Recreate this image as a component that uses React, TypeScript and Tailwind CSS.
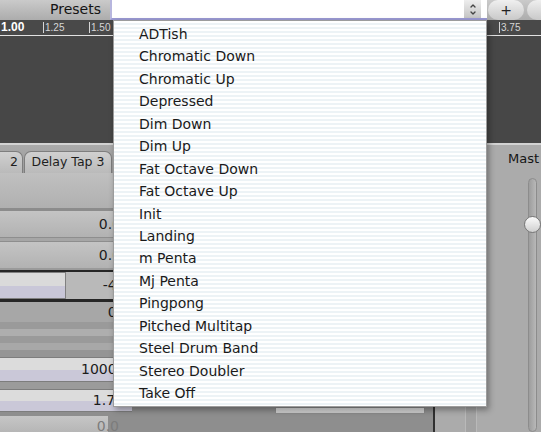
import { ChevronUp, ChevronDown } from "lucide-react";

const presets = [
  "ADTish",
  "Chromatic Down",
  "Chromatic Up",
  "Depressed",
  "Dim Down",
  "Dim Up",
  "Fat Octave Down",
  "Fat Octave Up",
  "Init",
  "Landing",
  "m Penta",
  "Mj Penta",
  "Pingpong",
  "Pitched Multitap",
  "Steel Drum Band",
  "Stereo Doubler",
  "Take Off",
];

function ValueRow({ h, value }: { h: string; value: string }) {
  return (
    <div className={`${h} flex items-center justify-end bg-gradient-to-b from-[#c4c4c4] to-[#b2b2b2] pr-[2px] text-[14px] text-[#1c1c1c]`}>
      {value}
    </div>
  );
}

function InputRow({ h, value, pr }: { h: string; value: string; pr: string }) {
  return (
    <div className={`${h} relative flex items-stretch`}>
      <div className="flex flex-1 flex-col border-y border-[#7d7d7d]">
        <div className="flex-1 bg-[#dcdcdc]" />
        <div className="flex-1 bg-[#cac8d8]" />
      </div>
      <div className={`absolute inset-y-0 right-0 ${pr} flex items-center text-[14px] text-[#1c1c1c]`}>{value}</div>
    </div>
  );
}

export default function App() {
  return (
    <div className="relative h-[432px] w-[541px] overflow-hidden bg-[#474747] font-['DejaVu_Sans',sans-serif]">
      {/* top bar */}
      <div className="flex h-[20px] bg-gradient-to-b from-[#cacaca] to-[#acacac]">
        <div className="w-[110px] shrink-0 pr-[9px] text-right text-[14px] leading-[19px] text-[#141414]">Presets</div>
        <div className="flex w-[377px] shrink-0 justify-end border-b-2 border-l-2 border-[#9a99d2] border-l-[#b7b6de] bg-white">
          <div className="mr-[6px] flex w-[17px] flex-col items-center justify-center bg-gradient-to-b from-[#eeeeee] to-[#c4c4c4] text-[#444]">
            <ChevronUp size={8} strokeWidth={4} className="-mb-[1px]" />
            <ChevronDown size={8} strokeWidth={4} />
          </div>
        </div>
        <div className="ml-[1px] flex w-[36px] shrink-0 items-center justify-center rounded-[10px] bg-gradient-to-b from-[#f0f0f0] to-[#c9c9c9] text-[14px] leading-none text-[#222]">
          +
        </div>
        <div className="ml-[3px] flex-1 rounded-l-[10px] bg-gradient-to-b from-[#efefef] to-[#c9c9c9]" />
      </div>

      {/* ruler */}
      <div className="relative h-[16px] border-b border-[#e2e2e2] bg-[#494949] font-['Liberation_Sans',sans-serif] text-[#d6d6d6]">
        <span className="absolute left-[1px] top-[1px] text-[12px] font-bold leading-[13px] text-white">1.00</span>
        <span className="absolute left-[43px] top-[2px] border-l border-[#d6d6d6] pl-[1px] text-[10px] leading-[11px]">1.25</span>
        <span className="absolute left-[89px] top-[2px] border-l border-[#d6d6d6] pl-[1px] text-[10px] leading-[11px]">1.50</span>
        <span className="absolute left-[499px] top-[2px] border-l border-[#d6d6d6] pl-[1px] text-[10px] leading-[11px]">3.75</span>
      </div>

      {/* dark arrangement area */}
      <div className="h-[107px] bg-[#474747]" />

      {/* lower panels */}
      <div className="flex h-[289px] border-t-2 border-[#d2d2d2]">
        <div className="flex w-[435px] shrink-0 flex-col border-r-2 border-[#303030] bg-[#8e8e8e]">
          {/* tabs */}
          <div className="flex h-[28px] items-end bg-gradient-to-b from-[#a9a9a9] to-[#9c9c9c]">
            <div className="flex h-[22px] w-[23px] items-center justify-end rounded-tr-[7px] border-r border-t border-[#7e7e7e] bg-gradient-to-b from-[#d0d0d0] to-[#bababa] pr-[4px] text-[12.5px] text-[#1e1e1e]">
              2
            </div>
            <div className="ml-[1px] flex h-[22px] w-[88px] items-center justify-center rounded-t-[7px] border-x border-t border-[#7e7e7e] bg-gradient-to-b from-[#d0d0d0] to-[#bababa] text-[12.5px] text-[#1e1e1e]">
              Delay Tap 3
            </div>
          </div>

          <div className="flex flex-1">
            <div className="flex w-[132px] shrink-0 flex-col">
              <div className="h-[35px] bg-gradient-to-b from-[#c0c0c0] to-[#b0b0b0]" />
              <div className="h-[3px] bg-[#8c8c8c]" />
              <ValueRow h="h-[26px]" value="0.00" />
              <div className="h-[5px] border-y border-[#8e8e8e] bg-[#a6a6a6]" />
              <ValueRow h="h-[26px]" value="0.00" />
              <div className="h-[4px] border-b-2 border-[#262626] bg-[#9a9a9a]" />
              <div className="flex h-[27px]">
                <div className="flex w-[66px] flex-col border-y border-r border-[#808080]">
                  <div className="flex-1 bg-[#dadada]" />
                  <div className="flex-1 bg-[#c9c7d8]" />
                </div>
                <div className="flex flex-1 items-center justify-end bg-[#b9b9b9] pr-[2px] text-[14px] text-[#1c1c1c]">-4.0</div>
              </div>
              <div className="h-[3px] bg-[#262626]" />
              <div className="flex h-[20px] items-center justify-end bg-[#a7a7a7] pr-[2px] text-[14px] text-[#1c1c1c]">0.0</div>
              <div className="h-[7px] bg-[#9a9a9a]" />
              <div className="h-[7px] bg-[#aeaeae]" />
              <div className="h-[7px] bg-[#9a9a9a]" />
              <div className="h-[7px] bg-[#a8a8a8]" />
              <div className="h-[7px] bg-[#959595]" />
              <InputRow h="h-[25px]" value="1000.0" pr="pr-[2px]" />
              <div className="h-[7px] bg-[#9b9b9b]" />
              <InputRow h="h-[23px]" value="1.70" pr="pr-[8px]" />
              <div className="h-[4px] bg-[#8e8e8e]" />
              <div className="flex h-[16px] bg-[#8e8e8e]">
                <div className="flex w-[108px] items-start justify-end bg-gradient-to-b from-[#c6c6c6] to-[#b6b6b6]">
                  <span className="-mr-[11px] whitespace-nowrap pt-[1px] text-[14px] leading-[18px] text-[#7c7c7c]">0.0</span>
                </div>
              </div>
            </div>
            <div className="flex-1 bg-[#8e8e8e]">
              <div className="ml-[143px] mt-[234px] h-[7px] w-[150px] border border-[#8a8a8a] bg-gradient-to-b from-[#e2e2e2] to-[#c8c8c8]" />
            </div>
          </div>
        </div>

        {/* right panel */}
        <div className="flex min-w-0 flex-1 overflow-hidden bg-[#ababab]">
          <div className="w-[30px] shrink-0" />
          <div className="w-[12px] shrink-0 border-x border-[#b9b9b9] bg-[#a2a2a2]" />
          <div className="flex min-w-0 flex-1 flex-col">
            <div className="whitespace-nowrap pl-[31px] pt-[5px] text-[13px] leading-[17px] text-[#151515]">Mast</div>
            <div className="relative mt-[11px] flex-1 pl-[51px]">
              <div className="h-full w-[9px] rounded-full border border-[#8c8c8c] bg-gradient-to-r from-[#9d9d9d] to-[#b8b8b8]" />
              <div className="absolute left-[47px] top-[38px] h-[17px] w-[17px] rounded-full border border-[#777] bg-gradient-to-b from-[#fbfbfb] to-[#cfcfcf]" />
            </div>
          </div>
        </div>
      </div>

      {/* presets dropdown */}
      <div className="absolute left-[113px] top-[20px] h-[387px] w-[374px] border border-[#9c9c9c] bg-[repeating-linear-gradient(180deg,#ffffff_0px,#ffffff_2px,#edf3f6_2px,#edf3f6_4px)] pt-[2px] shadow-[2px_3px_6px_rgba(0,0,0,0.35)]">
        {presets.map((p) => (
          <div key={p} className="h-[22.44px] pl-[25px] text-[14px] leading-[22.44px] text-[#1a1a1a]">
            {p}
          </div>
        ))}
      </div>
    </div>
  );
}
